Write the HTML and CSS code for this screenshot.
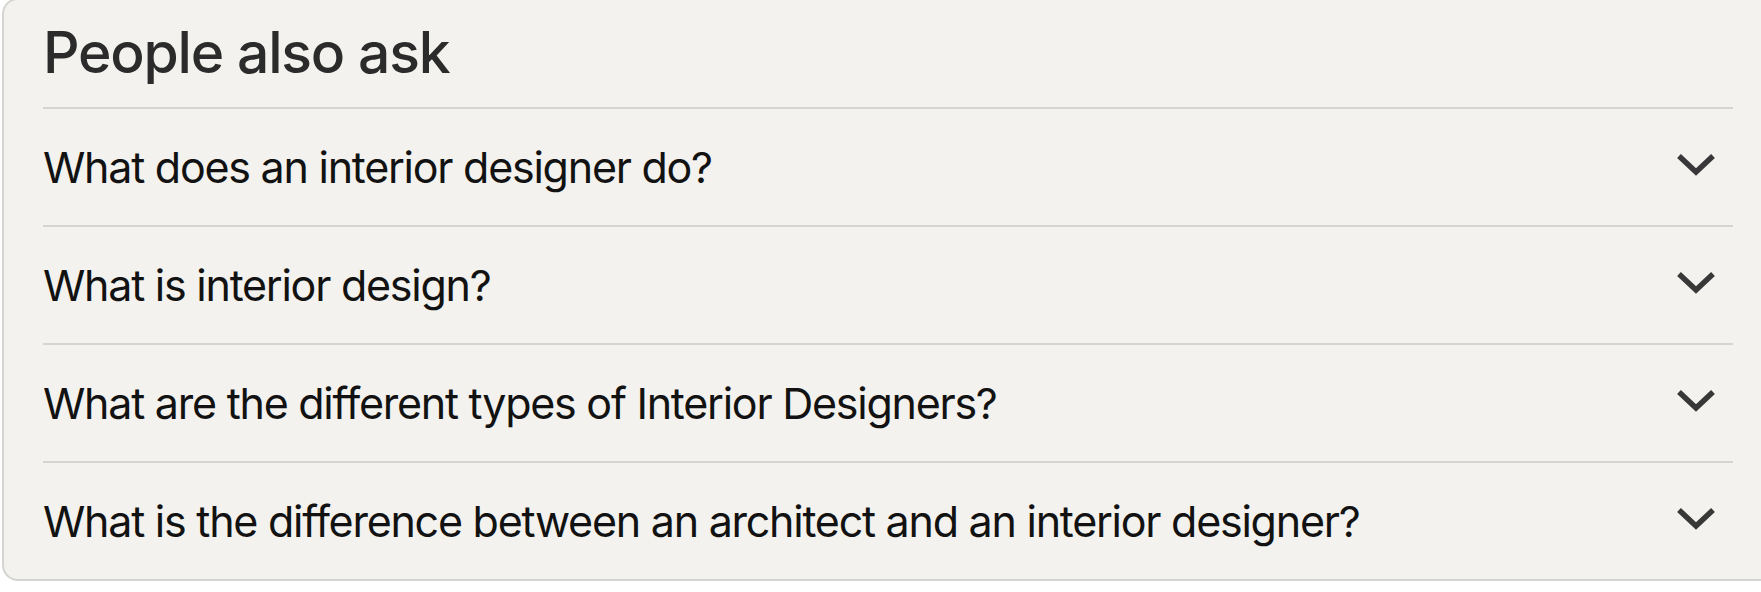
FILE: index.html
```html
<!DOCTYPE html>
<html>
<head>
<meta charset="utf-8">
<link rel="stylesheet" href="styles.css">
</head>
<body>
<div class="card">
  <h2 class="title">People also ask</h2>
  <div class="row">
    <span class="q">What does an interior designer do?</span>
    <svg class="chev" width="40" height="26" viewBox="0 0 40 26"><polyline points="3,4 20,20 37,4" fill="none" stroke="#383838" stroke-width="5.5"/></svg>
  </div>
  <div class="row">
    <span class="q">What is interior design?</span>
    <svg class="chev" width="40" height="26" viewBox="0 0 40 26"><polyline points="3,4 20,20 37,4" fill="none" stroke="#383838" stroke-width="5.5"/></svg>
  </div>
  <div class="row">
    <span class="q">What are the different types of Interior Designers?</span>
    <svg class="chev" width="40" height="26" viewBox="0 0 40 26"><polyline points="3,4 20,20 37,4" fill="none" stroke="#383838" stroke-width="5.5"/></svg>
  </div>
  <div class="row">
    <span class="q">What is the difference between an architect and an interior designer?</span>
    <svg class="chev" width="40" height="26" viewBox="0 0 40 26"><polyline points="3,4 20,20 37,4" fill="none" stroke="#383838" stroke-width="5.5"/></svg>
  </div>
</div>
</body>
</html>
```
FILE: styles.css
```css
html, body {
  margin: 0;
  padding: 0;
  background: #ffffff;
  overflow: hidden;
}
body {
  font-family: Inter, "Noto Sans", sans-serif;
}
.card {
  margin: -2px 0 0 2px;
  width: 1800px;
  box-sizing: border-box;
  background: #f3f2ee;
  border: 2px solid #d4d4d0;
  border-radius: 16px;
  padding: 0 65px 0 39px;
}
.card > * {
  width: 1690px;
}
.title {
  margin: 0;
  height: 107px;
  box-sizing: border-box;
  padding-top: 18px;
  font-size: 57px;
  font-weight: 500;
  color: #2b2b2b;
  letter-spacing: -1.2px;
  line-height: 70px;
}
.row {
  display: flex;
  justify-content: space-between;
  align-items: center;
  height: 118px;
  box-sizing: border-box;
  border-top: 2px solid #d4d4d0;
  padding-right: 17px;
}
.q {
  font-size: 43px;
  color: #121212;
  font-weight: 400;
  letter-spacing: -1.25px;
}
.chev {
  display: block;
  margin-top: -4px;
}
```
